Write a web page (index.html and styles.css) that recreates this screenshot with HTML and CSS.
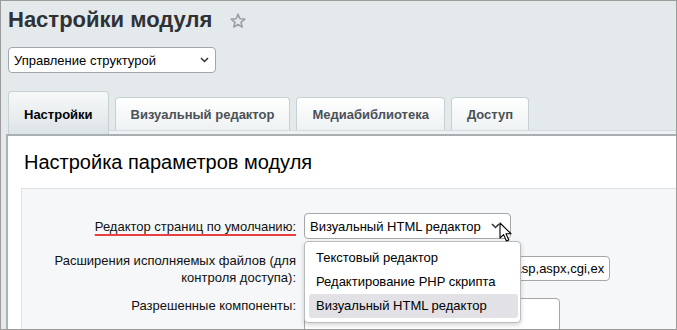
FILE: index.html
```html
<!DOCTYPE html>
<html lang="ru">
<head>
    <meta charset="UTF-8">
    <title>Настройки модуля</title>
    <link rel="stylesheet" href="styles.css">
</head>
<body>
<div class="frame">
    <div class="page-head">
        <h1>Настройки модуля</h1>
        <svg class="star" width="16" height="16" viewBox="0 0 16 16">
            <path d="M8 1.2 L9.9 5.8 L14.8 6.1 L11 9.3 L12.2 14.1 L8 11.5 L3.8 14.1 L5 9.3 L1.2 6.1 L6.1 5.8 Z" fill="none" stroke="#9aa0a4" stroke-width="1.6" stroke-linejoin="round"/>
        </svg>
    </div>

    <div class="fake-select module-select">
        <span>Управление структурой</span>
        <svg class="chevron" width="9" height="6" viewBox="0 0 9 6"><polyline points="1,1 4.5,4.5 8,1" fill="none" stroke="#333" stroke-width="1.5"/></svg>
    </div>

    <div class="tabs">
        <div class="tab active">Настройки</div>
        <div class="tab">Визуальный редактор</div>
        <div class="tab">Медиабиблиотека</div>
        <div class="tab">Доступ</div>
    </div>
    <div class="tab-strip"></div>

    <div class="panel">
        <h2>Настройка параметров модуля</h2>
        <div class="form-box">
            <div class="row row-editor">
                <div class="label"><span class="marked">Редактор страниц по умолчанию:</span></div>
                <div class="control">
                    <div class="fake-select editor-select">
                        <span>Визуальный HTML редактор</span>
                        <svg class="chevron" width="9" height="6" viewBox="0 0 9 6"><polyline points="1,1 4.5,4.5 8,1" fill="none" stroke="#333" stroke-width="1.5"/></svg>
                    </div>
                    <ul class="dropdown">
                        <li>Текстовый редактор</li>
                        <li>Редактирование PHP скрипта</li>
                        <li class="selected">Визуальный HTML редактор</li>
                    </ul>
                    <svg class="cursor" width="14" height="21" viewBox="0 0 14 21">
                        <path d="M1 1 L1 16 L4.6 12.6 L7.4 19 L9.8 18 L7 11.7 L12 11.7 Z" fill="#fff" stroke="#000" stroke-width="1.1" stroke-linejoin="round"/>
                    </svg>
                </div>
            </div>
            <div class="row row-ext">
                <div class="label">Расширения исполняемых файлов (для контроля доступа):</div>
                <div class="control">
                    <input class="text-input ext-input" type="text" value="php,php3,php4,php5,php6,phtml,pl,asp,aspx,cgi,exe,ico,shtm,shtml" readonly>
                </div>
            </div>
            <div class="row row-comp">
                <div class="label">Разрешенные компоненты:</div>
                <div class="control">
                    <div class="text-area"></div>
                </div>
            </div>
        </div>
    </div>
</div>
</body>
</html>
```

FILE: styles.css
```css
html, body {
    margin: 0;
    padding: 0;
}
body {
    width: 677px;
    height: 330px;
    overflow: hidden;
    font-family: "Liberation Sans", Arial, sans-serif;
    font-size: 13px;
    color: #000;
}
.frame {
    box-sizing: border-box;
    width: 677px;
    height: 330px;
    border: 1px solid #9c9c9c;
    background: #e4e9eb;
    padding-top: 6px;
    overflow: hidden;
}
.page-head {
    display: flex;
    align-items: center;
    padding-left: 7px;
}
h1 {
    margin: 0;
    font-size: 22px;
    line-height: 26px;
    font-weight: bold;
    color: #2e3237;
}
.star {
    margin-left: 18px;
    margin-top: 1px;
}
.fake-select {
    box-sizing: border-box;
    display: flex;
    align-items: center;
    justify-content: space-between;
    background: #fff;
    border: 1px solid #a3a7aa;
    border-radius: 4px;
    height: 26px;
    padding: 0 6px 0 5px;
    font-size: 13px;
}
.module-select {
    margin: 14px 0 0 7px;
    width: 208px;
}
.tabs {
    display: flex;
    align-items: flex-end;
    gap: 6px;
    margin: 18px 0 0 7px;
    height: 39px;
}
.tab {
    box-sizing: border-box;
    height: 33px;
    padding: 0 15px;
    display: flex;
    align-items: center;
    border: 1px solid #c9d0d4;
    border-bottom: none;
    border-radius: 4px 4px 0 0;
    background: linear-gradient(#ffffff, #eef2f3);
    font-weight: bold;
    color: #4a5157;
}
.tab.active {
    height: 43px;
    margin-bottom: -4px;
    padding-top: 2px;
    color: #000;
    background: linear-gradient(#f7f9f9, #dde4e6);
    position: relative;
    z-index: 1;
}
.tab-strip {
    height: 4px;
    margin-left: 7px;
    background: #eef2f3;
    border-top: 1px solid #d5dcdf;
    box-sizing: border-box;
}
.panel {
    height: 220px;
    margin-left: 5px;
    border-left: 2px solid #aab2b6;
    border-top: 2px solid #a8b0b4;
    background: #fff;
    padding-top: 14px;
}
h2 {
    margin: 0 0 0 16px;
    font-size: 20px;
    line-height: 24px;
    font-weight: normal;
    color: #000;
}
.form-box {
    margin: 14px 0 0 13px;
    height: 200px;
    background: #f5f7f8;
    border: 1px solid #dbe1e4;
    border-right: none;
    padding-top: 24px;
}
.row {
    display: flex;
    gap: 8px;
}
.label {
    width: 274px;
    flex-shrink: 0;
    text-align: right;
    line-height: 17px;
    color: #111;
}
.control {
    position: relative;
}
.row-editor .label {
    padding-top: 5px;
}
.marked {
    text-decoration: underline;
    text-decoration-color: #e8413f;
    text-decoration-thickness: 2px;
    text-underline-offset: 3px;
}
.editor-select {
    width: 207px;
    padding-right: 10px;
}
.row-ext {
    margin-top: 13px;
}
.row-ext .control {
    padding-top: 4px;
}
.text-input {
    box-sizing: border-box;
    width: 306px;
    height: 25px;
    border: 1px solid #a3a7aa;
    border-radius: 4px;
    background: #fff;
    padding: 0 5px;
    font-family: "Liberation Sans", Arial, sans-serif;
    font-size: 13px;
    color: #000;
    outline: none;
}
.row-comp {
    margin-top: 11px;
}
.row-comp .control {
    padding-top: 1px;
}
.text-area {
    box-sizing: border-box;
    width: 256px;
    height: 60px;
    border: 1px solid #a3a7aa;
    border-radius: 4px;
    background: #fff;
}
.dropdown {
    position: absolute;
    top: 28px;
    left: 0;
    z-index: 5;
    box-sizing: border-box;
    width: 217px;
    margin: 0;
    padding: 4px 2px 4px 4px;
    list-style: none;
    background: #fff;
    border: 1px solid #b9bcbf;
    border-radius: 4px;
    box-shadow: 0 2px 5px rgba(0, 0, 0, 0.18);
}
.dropdown li {
    height: 24px;
    line-height: 24px;
    padding-left: 7px;
    border-radius: 3px;
    white-space: nowrap;
}
.dropdown li.selected {
    background: #e1e1e6;
}
.cursor {
    position: absolute;
    left: 195px;
    top: 9px;
    z-index: 6;
}
```
